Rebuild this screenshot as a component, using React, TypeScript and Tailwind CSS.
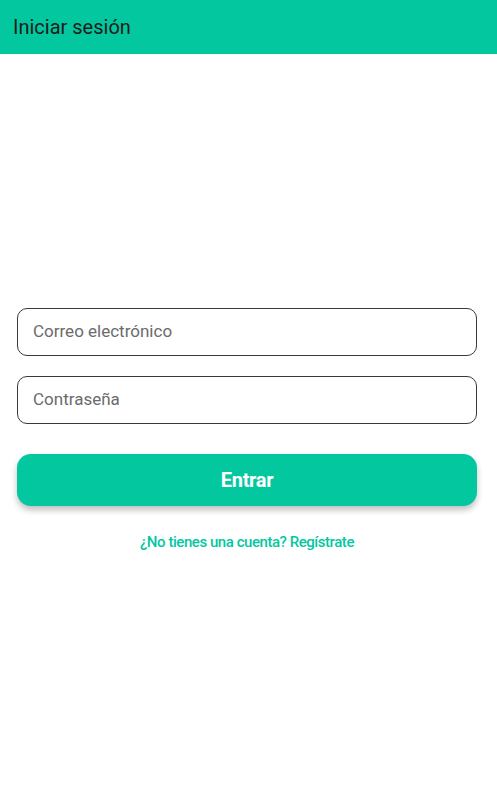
import React from 'react'

export default function App() {
  return (
    <div className="w-[497px] h-[809px] bg-white flex flex-col" style={{ fontFamily: 'Roboto, "Noto Sans", sans-serif' }}>
      <header className="h-[54px] bg-[#03c79e] flex items-center px-[13px] shrink-0">
        <h1 className="text-[20px] text-[#1c1c1c] font-normal">Iniciar sesión</h1>
      </header>

      <main className="flex-1 flex flex-col justify-center pl-[17px] pr-[20px] pb-[2px]">
        <input
          className="h-[48px] w-full border border-[#3a3a3a] rounded-[10px] px-[15px] pb-[2px] text-[17px] text-[#333] placeholder:text-[#6b6b6b] outline-none"
          placeholder="Correo electrónico"
        />
        <input
          type="password"
          className="mt-[20px] h-[48px] w-full border border-[#3a3a3a] rounded-[10px] px-[15px] pb-[2px] text-[17px] text-[#333] placeholder:text-[#6b6b6b] outline-none"
          placeholder="Contraseña"
        />
        <button className="mt-[30px] h-[52px] w-full rounded-[14px] bg-[#03c79e] text-white text-[20px] font-bold tracking-[-0.3px] shadow-[0_4px_6px_rgba(0,0,0,0.25)]">
          Entrar
        </button>
        <div className="mt-[25px] text-center text-[15px] font-medium text-[#03c79e] tracking-[-0.45px]">
          ¿No tienes una cuenta? Regístrate
        </div>
      </main>
    </div>
  )
}
